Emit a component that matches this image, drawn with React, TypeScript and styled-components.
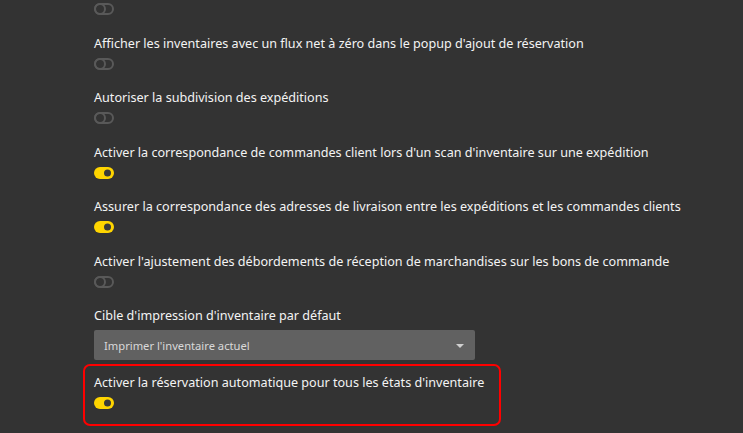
import React from "react";
import styled, { createGlobalStyle } from "styled-components";

const GlobalStyle = createGlobalStyle`
  html, body {
    margin: 0;
    padding: 0;
    background: #333333;
  }
  body {
    font-family: "Noto Sans", "Open Sans", sans-serif;
    color: #f4f4f4;
    overflow: hidden;
  }
`;

type Setting = { label?: string; on: boolean };

const settings: Setting[] = [
  { on: false },
  {
    label:
      "Afficher les inventaires avec un flux net à zéro dans le popup d'ajout de réservation",
    on: false,
  },
  { label: "Autoriser la subdivision des expéditions", on: false },
  {
    label:
      "Activer la correspondance de commandes client lors d'un scan d'inventaire sur une expédition",
    on: true,
  },
  {
    label:
      "Assurer la correspondance des adresses de livraison entre les expéditions et les commandes clients",
    on: true,
  },
  {
    label:
      "Activer l'ajustement des débordements de réception de marchandises sur les bons de commande",
    on: false,
  },
];

const Page = styled.div`
  width: 743px;
  height: 433px;
  box-sizing: border-box;
  padding: 3px 0 0 94px;
  overflow: hidden;
`;

const Row = styled.div`
  display: flex;
  flex-direction: column;
  align-items: flex-start;
  padding-bottom: 18.5px;
`;

const Label = styled.div`
  font-size: 12.6px;
  line-height: 20px;
  white-space: nowrap;
  margin-bottom: 4px;
`;

const Track = styled.div<{ $on: boolean }>`
  position: relative;
  width: 20px;
  height: 12px;
  box-sizing: border-box;
  border-radius: 6px;
  background: ${(p) => (p.$on ? "#ffd500" : "transparent")};
  border: ${(p) => (p.$on ? "none" : "2px solid #595959")};
`;

const Knob = styled.div<{ $on: boolean }>`
  position: absolute;
  top: 50%;
  width: ${(p) => (p.$on ? "7px" : "12px")};
  height: ${(p) => (p.$on ? "7px" : "12px")};
  box-sizing: border-box;
  border-radius: 50%;
  transform: translateY(-50%);
  ${(p) =>
    p.$on
      ? "right: 3px; background: #3a3a3a;"
      : "left: -2px; border: 2px solid #595959;"}
`;

const Toggle: React.FC<{ on: boolean }> = ({ on }) => (
  <Track $on={on}>
    <Knob $on={on} />
  </Track>
);

const Select = styled.div`
  width: 381px;
  height: 30px;
  box-sizing: border-box;
  margin-top: 1.5px;
  padding: 0 11px 0 10px;
  display: flex;
  align-items: center;
  justify-content: space-between;
  background: #616161;
  border-radius: 2px;
  font-size: 11.2px;
  color: #d9d9d9;
`;

const Caret = styled.span`
  width: 0;
  height: 0;
  margin-top: 2px;
  border-left: 4px solid transparent;
  border-right: 4px solid transparent;
  border-top: 4px solid #d0d0d0;
`;

const Highlight = styled.div`
  width: 418px;
  margin: 4px 0 0 -11px;
  box-sizing: border-box;
  padding: 7px 9px 15px 9px;
  border: 2px solid #ff0000;
  border-radius: 7px;
`;

export default function App() {
  return (
    <>
      <GlobalStyle />
      <Page>
        {settings.map((s, i) => (
          <Row key={i}>
            {s.label && <Label>{s.label}</Label>}
            <Toggle on={s.on} />
          </Row>
        ))}
        <Label>Cible d'impression d'inventaire par défaut</Label>
        <Select>
          Imprimer l'inventaire actuel
          <Caret />
        </Select>
        <Highlight>
          <Label>
            Activer la réservation automatique pour tous les états d'inventaire
          </Label>
          <Toggle on />
        </Highlight>
      </Page>
    </>
  );
}
